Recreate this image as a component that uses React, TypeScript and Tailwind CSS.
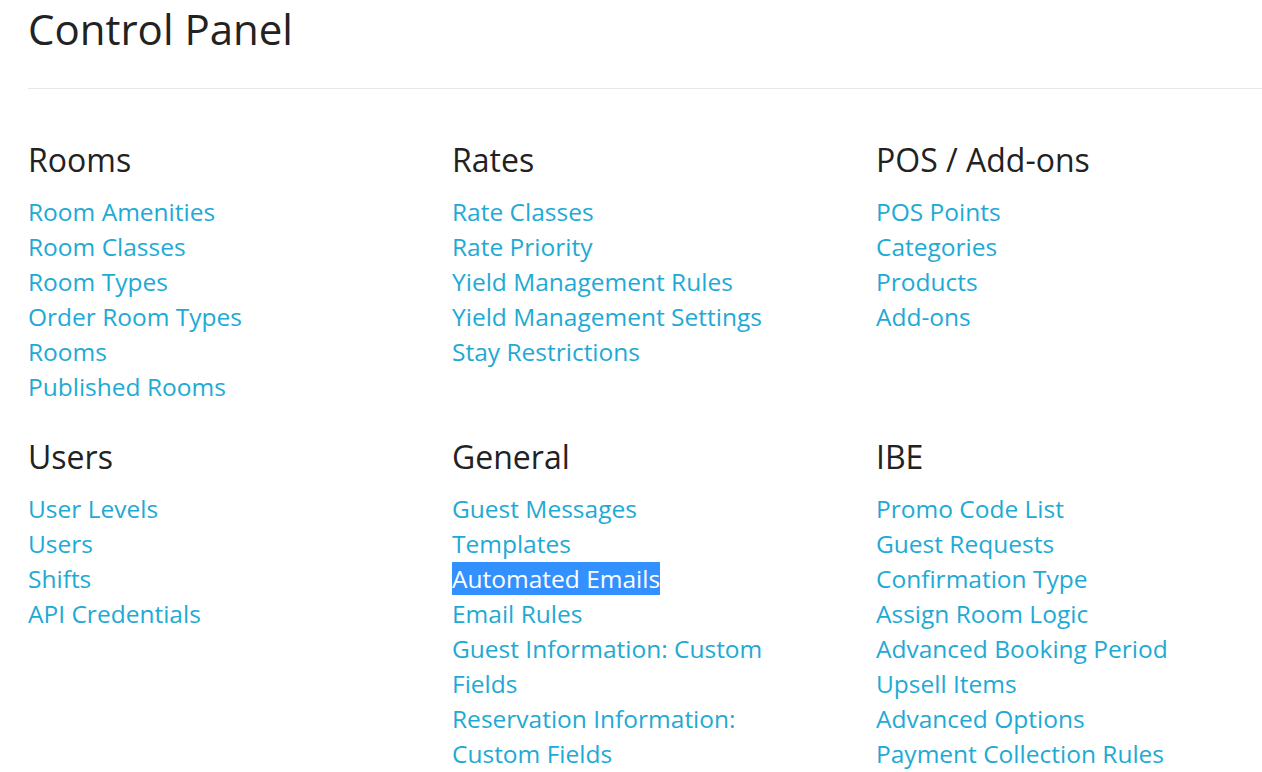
const sections = [
  {
    title: 'Rooms',
    links: ['Room Amenities', 'Room Classes', 'Room Types', 'Order Room Types', 'Rooms', 'Published Rooms'],
  },
  {
    title: 'Rates',
    links: ['Rate Classes', 'Rate Priority', 'Yield Management Rules', 'Yield Management Settings', 'Stay Restrictions'],
  },
  {
    title: 'POS / Add-ons',
    links: ['POS Points', 'Categories', 'Products', 'Add-ons'],
  },
  {
    title: 'Users',
    links: ['User Levels', 'Users', 'Shifts', 'API Credentials'],
  },
  {
    title: 'General',
    links: [
      'Guest Messages',
      'Templates',
      'Automated Emails',
      'Email Rules',
      'Guest Information: Custom Fields',
      'Reservation Information: Custom Fields',
    ],
  },
  {
    title: 'IBE',
    links: [
      'Promo Code List',
      'Guest Requests',
      'Confirmation Type',
      'Assign Room Logic',
      'Advanced Booking Period',
      'Upsell Items',
      'Advanced Options',
      'Payment Collection Rules',
    ],
  },
]

export default function App() {
  return (
    <div className="min-h-screen bg-white pl-[28px] font-['Open_Sans',sans-serif]">
      {/* Header */}
      <h1 className="pt-[1px] pb-[31px] text-[42px] leading-[56px] text-[#222]">Control Panel</h1>
      <hr className="border-t border-[#e8e8e8]" />

      {/* Sections */}
      <div className="grid grid-cols-[424px_424px_1fr] pt-[49px]">
        {sections.map((s) => (
          <div key={s.title} className="pb-[31px]">
            <h2 className="text-[32px] leading-[44px] text-[#222] mb-[12px]">{s.title}</h2>
            <ul className="w-[345px]">
              {s.links.map((l) => (
                <li key={l} className="text-[24.5px] leading-[35px] text-[#1eaad5]">
                  {l === 'Automated Emails' ? (
                    <a className="bg-[#3390ff] text-white">{l}</a>
                  ) : (
                    <a>{l}</a>
                  )}
                </li>
              ))}
            </ul>
          </div>
        ))}
      </div>
    </div>
  )
}
